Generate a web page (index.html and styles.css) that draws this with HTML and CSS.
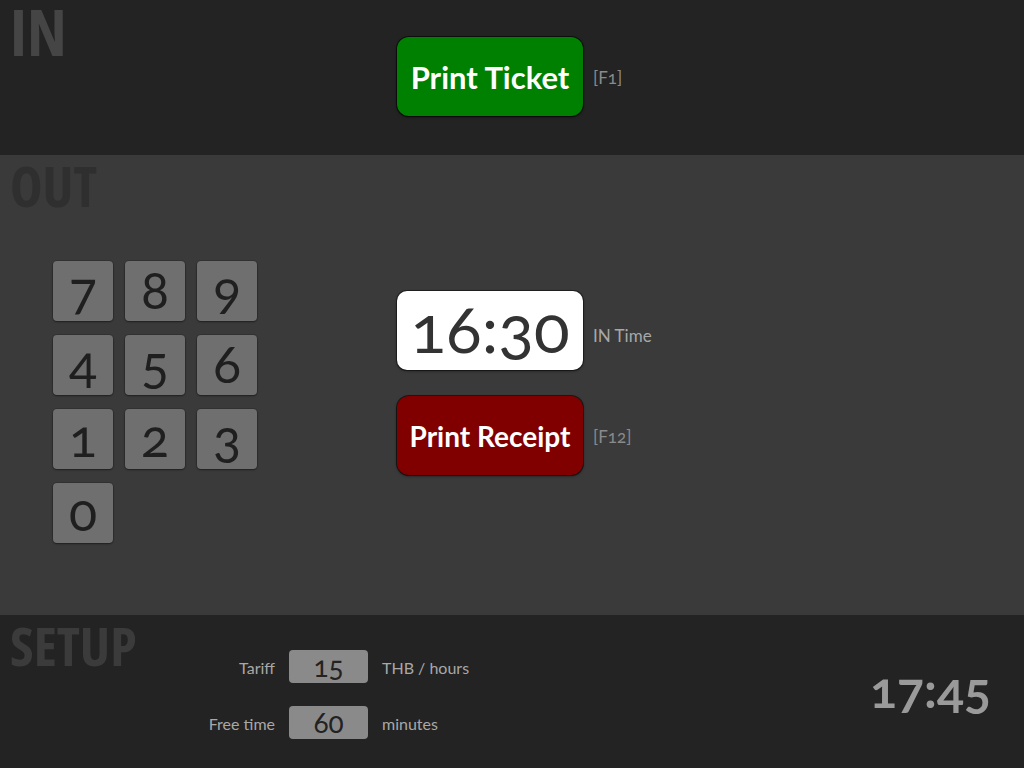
FILE: index.html
```html
<!DOCTYPE html>
<html>
<head>
<meta charset="utf-8">
<link rel="stylesheet" href="styles.css">
</head>
<body>
<section class="panel panel-in">
  <h1 class="panel-title title-in">IN</h1>
  <div class="action-row">
    <button class="big-btn btn-green">Print Ticket</button>
    <span class="hint">[F1]</span>
  </div>
</section>
<section class="panel panel-out">
  <h1 class="panel-title title-out">OUT</h1>
  <div class="out-body">
    <div class="keypad">
      <div class="key">7</div><div class="key">8</div><div class="key">9</div>
      <div class="key">4</div><div class="key">5</div><div class="key">6</div>
      <div class="key">1</div><div class="key">2</div><div class="key">3</div>
      <div class="key">0</div>
    </div>
    <div class="out-actions">
      <div class="action-row">
        <div class="time-box">16:30</div>
        <span class="hint small">IN Time</span>
      </div>
      <div class="action-row">
        <button class="big-btn btn-red">Print Receipt</button>
        <span class="hint">[F12]</span>
      </div>
    </div>
  </div>
</section>
<section class="panel panel-setup">
  <h1 class="panel-title title-setup">SETUP</h1>
  <div class="setup-body">
    <div class="setup-form">
      <label class="form-label">Tariff</label>
      <div class="num-box">15</div>
      <span class="unit">THB / hours</span>
      <label class="form-label">Free time</label>
      <div class="num-box">60</div>
      <span class="unit">minutes</span>
    </div>
    <div class="clock">17:45</div>
  </div>
</section>
</body>
</html>
```
FILE: styles.css
```css
* { box-sizing: border-box; }
html, body {
  margin: 0;
  padding: 0;
  width: 1024px;
  height: 768px;
  overflow: hidden;
  font-family: "Lato", "Open Sans", sans-serif;
  font-variant-numeric: oldstyle-nums;
}
.panel {
  display: grid;
  grid-template: 1fr / 1fr;
}
.panel > * { grid-area: 1 / 1; }
.panel-in { height: 155px; background: #232323; }
.panel-out { height: 460px; background: #3a3a3a; }
.panel-setup { height: 153px; background: #232323; }

.panel-title {
  margin: 0;
  padding-left: 10px;
  font-family: "Open Sans", "Lato", sans-serif;
  font-stretch: 79%;
  font-weight: 700;
  line-height: 1;
  align-self: start;
  justify-self: start;
}
.title-in { font-size: 64px; color: #454545; padding-top: 0; }
.title-out { font-size: 55px; color: #2f2f2f; padding-top: 3px; }
.title-setup { font-size: 54px; color: #3b3b3b; padding-top: 3px; }

.action-row {
  display: flex;
  align-items: center;
  gap: 10px;
}
.panel-in .action-row {
  align-self: start;
  margin-top: 37px;
  margin-left: 397px;
}
.big-btn {
  width: 186px;
  height: 79px;
  border: none;
  border-radius: 12px;
  color: #fff;
  font-family: inherit;
  font-weight: 700;
  font-size: 31px;
  padding: 0;
  box-shadow: 0 0 0 1px rgba(0,0,0,0.55), 0 1px 3px rgba(0,0,0,0.6);
}
.btn-green { background: #008000; }
.btn-red { background: #800000; font-size: 28px; }
.hint {
  color: #8a8a8a;
  font-size: 17px;
  padding-top: 2px;
}
.hint.small { font-size: 17px; color: #a8a8a8; padding-top: 9px; }

.out-body {
  display: flex;
  align-items: flex-start;
  padding-left: 53px;
  padding-top: 106px;
}
.keypad {
  display: grid;
  grid-template-columns: repeat(3, 60px);
  grid-auto-rows: 60px;
  column-gap: 12px;
  row-gap: 14px;
}
.key {
  background: #6f6f6f;
  border-radius: 4px;
  box-shadow: 0 0 0 1px rgba(0,0,0,0.12), 0 1px 2px rgba(0,0,0,0.4);
  color: #1f1f1f;
  font-size: 52px;
  display: flex;
  align-items: center;
  justify-content: center;
  line-height: 1;
  padding-bottom: 4px;
}
.out-actions {
  margin-left: 140px;
  margin-top: 30px;
  display: flex;
  flex-direction: column;
  gap: 26px;
}
.time-box {
  width: 186px;
  height: 79px;
  background: #fff;
  border-radius: 10px;
  box-shadow: 0 0 0 1px rgba(0,0,0,0.4), 0 1px 3px rgba(0,0,0,0.5);
  color: #333;
  font-size: 66px;
  display: flex;
  align-items: center;
  justify-content: center;
  line-height: 1;
  padding-bottom: 6px;
}

.setup-body {
  display: flex;
  align-items: center;
  justify-content: space-between;
  padding-right: 33px;
}
.setup-form {
  display: grid;
  grid-template-columns: 85px 79px auto;
  column-gap: 14px;
  row-gap: 23px;
  align-items: center;
  margin-left: 190px;
  margin-top: 5px;
}
.form-label {
  text-align: right;
  color: #a8a8a8;
  font-size: 16px;
  padding-top: 3px;
}
.num-box {
  height: 33px;
  background: #8a8a8a;
  border-radius: 4px;
  color: #222;
  font-size: 28px;
  display: flex;
  align-items: center;
  justify-content: center;
  line-height: 1;
}
.unit {
  color: #a8a8a8;
  font-size: 16px;
  padding-top: 3px;
}
.clock {
  color: #9a9a9a;
  font-size: 50px;
  font-weight: 700;
  margin-top: -6px;
}
```
